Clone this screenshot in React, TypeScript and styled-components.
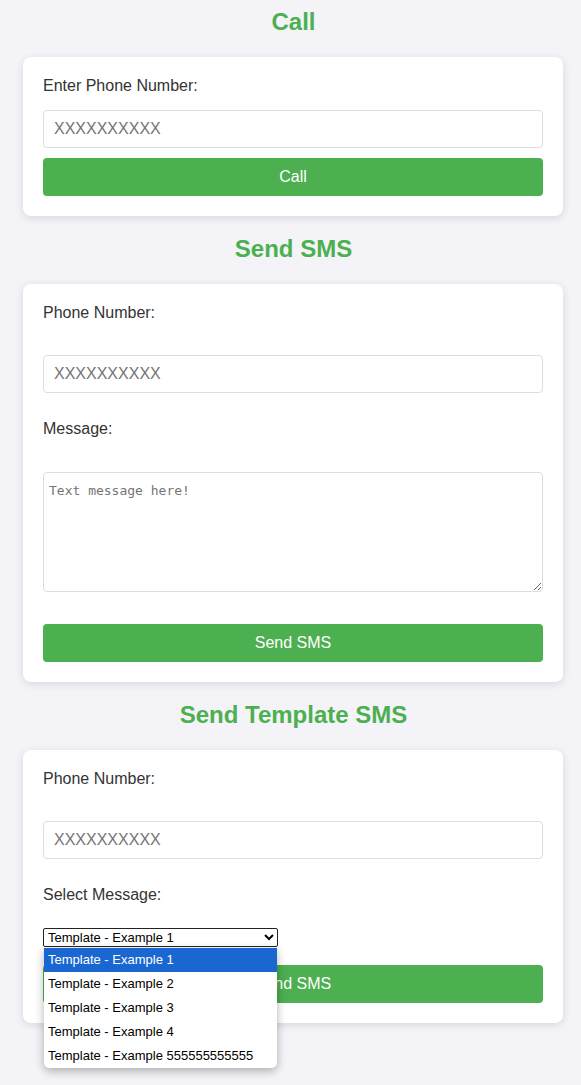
import React from "react";
import styled, { createGlobalStyle } from "styled-components";

const Global = createGlobalStyle`
  html, body { margin: 0; padding: 0; }
  body {
    background: #f4f4f8;
    font-family: "Liberation Sans", Arial, sans-serif;
    color: #333;
  }
  * { box-sizing: border-box; }
`;

const Page = styled.div`
  min-height: 1085px;
  padding: 8px 18px 0 23px;
  display: flex;
  flex-direction: column;
`;

const Heading = styled.h2`
  margin: 0 0 21px 0;
  height: 28px;
  line-height: 28px;
  font-size: 24px;
  font-weight: bold;
  text-align: center;
  color: #4caf50;
  padding-left: 1px;
`;

const Card = styled.div`
  width: 540px;
  background: #fff;
  border-radius: 8px;
  box-shadow: 0 2px 8px rgba(0, 0, 0, 0.12);
  padding: 20px;
  margin-bottom: 19px;
  display: flex;
  flex-direction: column;
`;

const Label = styled.label<{ $gap: number }>`
  display: block;
  font-size: 16px;
  line-height: 18px;
  color: #333;
  margin-bottom: ${(p) => p.$gap}px;
`;

const TextInput = styled.input<{ $gap: number }>`
  display: block;
  width: 100%;
  height: 38px;
  padding: 0 10px;
  border: 1px solid #ddd;
  border-radius: 4px;
  font-family: "Liberation Sans", Arial, sans-serif;
  font-size: 16px;
  color: #333;
  margin-bottom: ${(p) => p.$gap}px;
  outline: none;
  &::placeholder { color: #757575; }
`;

const TextArea = styled.textarea`
  display: block;
  width: 100%;
  height: 120px;
  padding: 10px 5px;
  border: 1px solid #ddd;
  border-radius: 4px;
  font-family: "DejaVu Sans Mono", "Liberation Mono", monospace;
  font-size: 13px;
  margin-bottom: 32px;
  resize: both;
  outline: none;
  &::placeholder { color: #757575; }
`;

const Button = styled.button`
  display: block;
  width: 100%;
  height: 38px;
  border: none;
  border-radius: 4px;
  background: #4caf50;
  color: #fff;
  font-family: "Liberation Sans", Arial, sans-serif;
  font-size: 16px;
  cursor: pointer;
`;

const SelectWrap = styled.div`
  position: relative;
  width: 235px;
  margin-bottom: 18px;
`;

const Select = styled.select`
  display: block;
  width: 235px;
  height: 19px;
  padding: 0;
  border: 1px solid #222;
  border-radius: 2px;
  background: #fff;
  color: #000;
  font-family: "Liberation Sans", Arial, sans-serif;
  font-size: 13px;
`;

const Popup = styled.ul`
  position: absolute;
  top: 20px;
  left: 1px;
  width: 233px;
  margin: 0;
  padding: 0;
  list-style: none;
  background: #fff;
  border-radius: 0 0 6px 6px;
  box-shadow: 0 3px 10px rgba(0, 0, 0, 0.3);
  overflow: hidden;
  z-index: 10;
`;

const Option = styled.li<{ $active?: boolean }>`
  height: 24px;
  line-height: 24px;
  padding-left: 4px;
  font-size: 13px;
  color: ${(p) => (p.$active ? "#fff" : "#000")};
  background: ${(p) => (p.$active ? "#1a67d2" : "#fff")};
`;

const templates = [
  "Template - Example 1",
  "Template - Example 2",
  "Template - Example 3",
  "Template - Example 4",
  "Template - Example 555555555555",
];

export default function App() {
  return (
    <>
      <Global />
      <Page>
        <Heading>Call</Heading>
        <Card>
          <Label $gap={15}>Enter Phone Number:</Label>
          <TextInput $gap={10} placeholder="XXXXXXXXXX" />
          <Button>Call</Button>
        </Card>

        <Heading>Send SMS</Heading>
        <Card>
          <Label $gap={33}>Phone Number:</Label>
          <TextInput $gap={27} placeholder="XXXXXXXXXX" />
          <Label $gap={34}>Message:</Label>
          <TextArea placeholder="Text message here!" />
          <Button>Send SMS</Button>
        </Card>

        <Heading>Send Template SMS</Heading>
        <Card>
          <Label $gap={33}>Phone Number:</Label>
          <TextInput $gap={27} placeholder="XXXXXXXXXX" />
          <Label $gap={24}>Select Message:</Label>
          <SelectWrap>
            <Select defaultValue={templates[0]}>
              {templates.map((t) => (
                <option key={t}>{t}</option>
              ))}
            </Select>
            <Popup>
              {templates.map((t, i) => (
                <Option key={t} $active={i === 0}>
                  {t}
                </Option>
              ))}
            </Popup>
          </SelectWrap>
          <Button>Send SMS</Button>
        </Card>
      </Page>
    </>
  );
}
